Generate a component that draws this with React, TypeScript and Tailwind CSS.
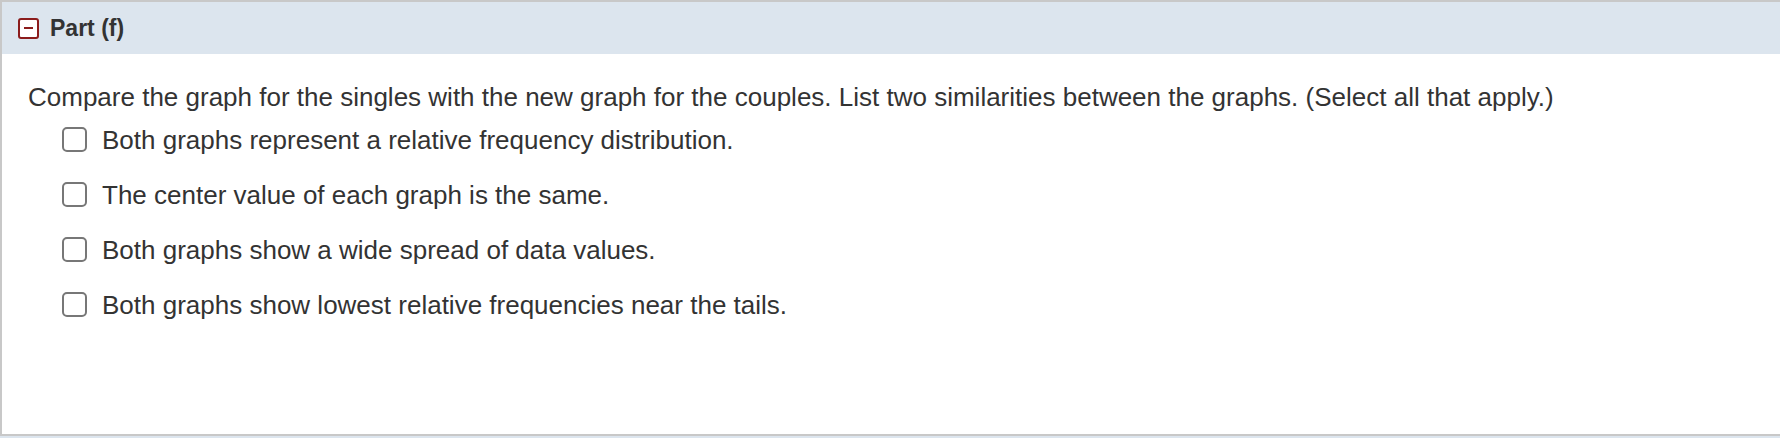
import React from 'react';

const OPTIONS = [
  'Both graphs represent a relative frequency distribution.',
  'The center value of each graph is the same.',
  'Both graphs show a wide spread of data values.',
  'Both graphs show lowest relative frequencies near the tails.',
];

function CollapseIcon() {
  return (
    <span className="flex h-[21px] w-[21px] items-center justify-center rounded-[3px] border-2 border-[#8b1c1c] bg-white">
      <span className="h-[2px] w-[9px] bg-[#8b1c1c]" />
    </span>
  );
}

export default function App() {
  const [checked, setChecked] = React.useState<boolean[]>(OPTIONS.map(() => false));

  const toggle = (i: number) => {
    setChecked(prev => prev.map((c, j) => (j === i ? !c : c)));
  };

  return (
    <div className="h-[438px] w-[1780px] bg-[#dce5ee] font-['Liberation_Sans',Arial,sans-serif] text-[#333]">
      <div className="flex h-[436px] flex-col border-t-2 border-b-2 border-l-2 border-[#c8c8c8] bg-white">
        {/* Header */}
        <div className="flex h-[52px] items-center gap-[11px] bg-[#dce5ee] pl-4">
          <CollapseIcon />
          <span className="text-[23px] font-bold leading-none">Part (f)</span>
        </div>

        {/* Body */}
        <div className="pl-[26px] pt-[28px]">
          <p className="text-[26px] leading-[30px]">
            Compare the graph for the singles with the new graph for the couples. List two similarities between the graphs. (Select all that apply.)
          </p>
          <div className="mt-[11px] flex flex-col gap-[23px] pl-[34px]">
            {OPTIONS.map((opt, i) => (
              <label key={opt} className="flex cursor-pointer items-center gap-[15px]">
                <input
                  type="checkbox"
                  checked={checked[i]}
                  onChange={() => toggle(i)}
                  className="sr-only"
                />
                <span className="flex h-[25px] w-[25px] shrink-0 items-center justify-center rounded-[5px] border-2 border-[#777] bg-white">
                  {checked[i] && <span className="h-[11px] w-[11px] rounded-[2px] bg-[#333]" />}
                </span>
                <span className="pt-[2px] text-[26px] leading-[30px]">{opt}</span>
              </label>
            ))}
          </div>
        </div>
      </div>
    </div>
  );
}
